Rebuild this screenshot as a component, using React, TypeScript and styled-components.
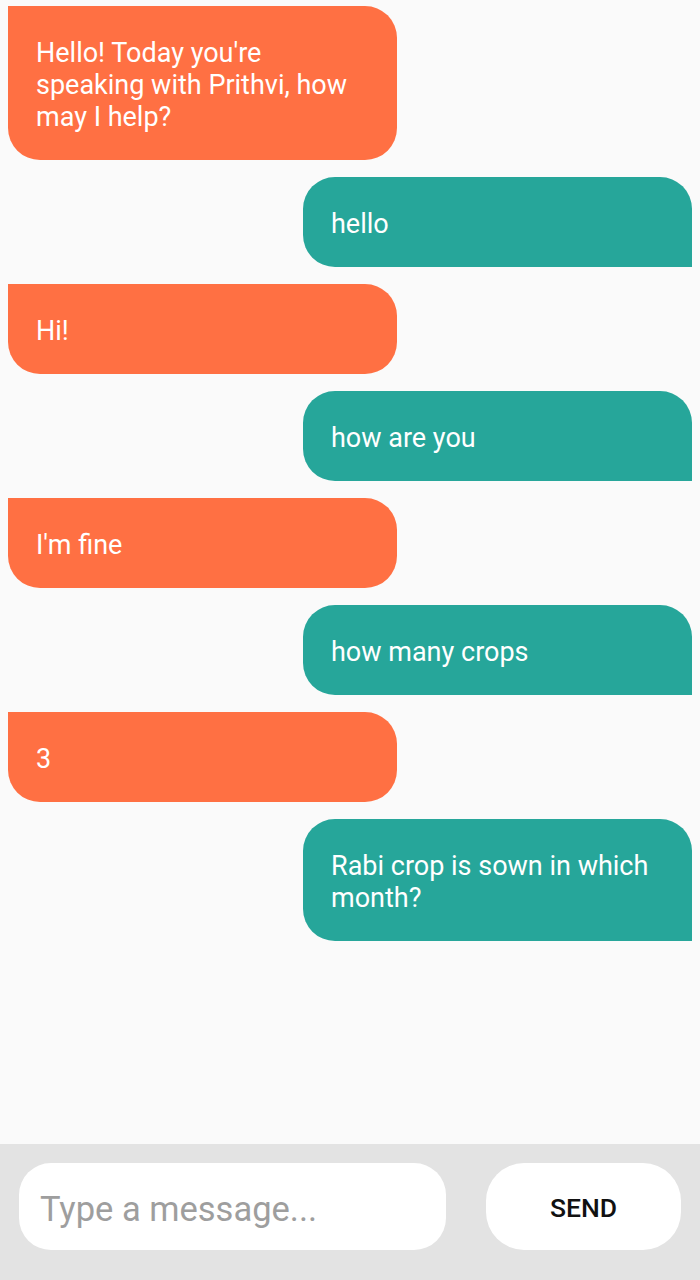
import React from "react";
import styled, { createGlobalStyle } from "styled-components";

const Global = createGlobalStyle`
  html, body { margin: 0; padding: 0; }
  body { background: #fafafa; font-family: Roboto, "Noto Sans", sans-serif; }
  * { box-sizing: border-box; }
`;

const Page = styled.div`
  display: flex;
  flex-direction: column;
  height: 1280px;
  background: #fafafa;
`;

const List = styled.div`
  flex: 1;
  display: flex;
  flex-direction: column;
  gap: 17px;
  padding: 6px 8px 0 8px;
`;

const Bubble = styled.div<{ $mine: boolean }>`
  width: 389px;
  align-self: ${(p) => (p.$mine ? "flex-end" : "flex-start")};
  background: ${(p) => (p.$mine ? "#26a69a" : "#ff7043")};
  color: #ffffff;
  font-family: Roboto, sans-serif;
  font-size: 27px;
  line-height: 32px;
  padding: 31px 28px 27px 28px;
  border-radius: ${(p) => (p.$mine ? "32px 32px 0 32px" : "0 32px 32px 32px")};
`;

const Bar = styled.div`
  height: 136px;
  background: #e3e3e3;
  display: flex;
  align-items: flex-start;
  padding: 19px 19px 0 19px;
  gap: 40px;
`;

const Input = styled.input`
  width: 427px;
  height: 87px;
  border: none;
  outline: none;
  border-radius: 32px;
  background: #ffffff;
  padding: 4px 0 0 21px;
  font-family: Roboto, sans-serif;
  font-size: 34.5px;
  color: #333;
  &::placeholder { color: #9e9e9e; }
`;

const SendButton = styled.button`
  width: 195px;
  height: 87px;
  border: none;
  border-radius: 38px;
  background: #ffffff;
  font-family: Roboto, sans-serif;
  font-weight: 500;
  font-size: 26.5px;
  color: #111111;
  padding: 2px 0 0 0;
`;

const messages: { text: string; mine: boolean }[] = [
  { text: "Hello! Today you're speaking with Prithvi, how may I help?", mine: false },
  { text: "hello", mine: true },
  { text: "Hi!", mine: false },
  { text: "how are you", mine: true },
  { text: "I'm fine", mine: false },
  { text: "how many crops", mine: true },
  { text: "3", mine: false },
  { text: "Rabi crop is sown in which month?", mine: true },
];

export default function App() {
  return (
    <>
      <Global />
      <Page>
        <List>
          {messages.map((m, i) => (
            <Bubble key={i} $mine={m.mine}>
              {m.text}
            </Bubble>
          ))}
        </List>
        <Bar>
          <Input placeholder="Type a message..." />
          <SendButton>SEND</SendButton>
        </Bar>
      </Page>
    </>
  );
}
